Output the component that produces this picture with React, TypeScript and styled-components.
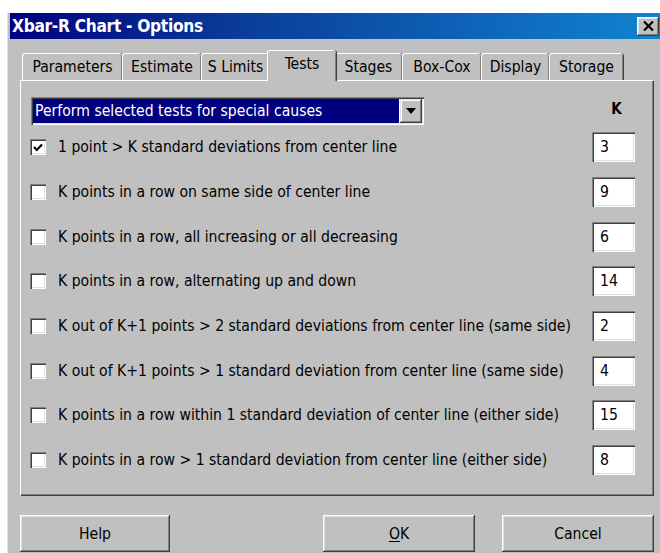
import React from "react"
import styled, { createGlobalStyle } from "styled-components"

const GlobalStyle = createGlobalStyle`
  html, body {
    margin: 0;
    background: #ffffff;
    overflow: hidden;
  }

  body {
    font-family: "DejaVu Sans Condensed", "Liberation Sans", sans-serif;
    font-size: 15.6px;
    color: #000000;
  }
`

const tabs = [
  { label: "Parameters", width: 100 },
  { label: "Estimate", width: 79 },
  { label: "S Limits", width: 68 },
  { label: "Tests", width: 65 },
  { label: "Stages", width: 68 },
  { label: "Box-Cox", width: 79 },
  { label: "Display", width: 68 },
  { label: "Storage", width: 74 },
]

const tests = [
  { label: "1 point > K standard deviations from center line", k: "3", checked: true },
  { label: "K points in a row on same side of center line", k: "9" },
  { label: "K points in a row, all increasing or all decreasing", k: "6" },
  { label: "K points in a row, alternating up and down", k: "14" },
  { label: "K out of K+1 points > 2 standard deviations from center line (same side)", k: "2" },
  { label: "K out of K+1 points > 1 standard deviation from center line (same side)", k: "4" },
  { label: "K points in a row within 1 standard deviation of center line (either side)", k: "15" },
  { label: "K points in a row > 1 standard deviation from center line (either side)", k: "8" },
]

export default function App() {
  return (
    <>
      <GlobalStyle/>
      <Page>
        <Window>
          <TitleBar>
            <Title>Xbar-R Chart - Options</Title>
            <CloseButton aria-label="Close">
              <svg width="11" height="10" viewBox="0 0 11 10">
                <path d="M1 0.5 L10 9.5 M10 0.5 L1 9.5" stroke="#000" strokeWidth="2.2"/>
              </svg>
            </CloseButton>
          </TitleBar>

          <Body>
            <TabStrip>
              {tabs.map(tab => (
                <Tab key={tab.label} $width={tab.width} $active={tab.label === "Tests"}>
                  {tab.label}
                </Tab>
              ))}
            </TabStrip>

            <Panel>
              <HeaderRow>
                <Select>
                  <SelectValue>Perform selected tests for special causes</SelectValue>
                  <ArrowButton>
                    <svg width="10" height="6" viewBox="0 0 10 6">
                      <path d="M0 0 H10 L5 6 Z" fill="#000"/>
                    </svg>
                  </ArrowButton>
                </Select>
                <KColumn>K</KColumn>
              </HeaderRow>

              <TestList>
                {tests.map(test => (
                  <TestRow key={test.label}>
                    <Checkbox>
                      {test.checked && (
                        <svg width="10" height="9" viewBox="0 0 10 9">
                          <path d="M1 4 L3.8 7 L9 1.5" stroke="#000" strokeWidth="2.2" fill="none"/>
                        </svg>
                      )}
                    </Checkbox>
                    <TestLabel>{test.label}</TestLabel>
                    <KInput>{test.k}</KInput>
                  </TestRow>
                ))}
              </TestList>
            </Panel>

            <ButtonRow>
              <Button>Help</Button>
              <Spacer/>
              <Button><u>O</u>K</Button>
              <Button>Cancel</Button>
            </ButtonRow>
          </Body>
        </Window>
      </Page>
    </>
  )
}

const Page = styled.div`
  height: 553px;
  padding: 13px 0 0 7px;
  box-sizing: border-box;
`

const Window = styled.div`
  background: #c0c0c0;
  border-left: 1px solid #dfdfdf;
  padding-left: 2px;
  width: 651px;
  height: 560px;
`

const TitleBar = styled.div`
  align-items: center;
  background: linear-gradient(to right, #000080 0%, #0a3c9a 35%, #1084d0 100%);
  display: flex;
  height: 26px;
  justify-content: space-between;
  padding: 0 2px 0 2px;
`

const Title = styled.span`
  color: #ffffff;
  font-size: 17.2px;
  font-weight: bold;
  letter-spacing: -0.3px;
  margin-top: -1px;
`

const CloseButton = styled.div`
  align-items: center;
  background: #c0c0c0;
  box-shadow: inset -1px -1px #404040, inset 1px 1px #ffffff, inset -2px -2px #808080, inset 2px 2px #dfdfdf;
  display: flex;
  height: 19px;
  justify-content: center;
  width: 22px;
`

const Body = styled.div`
  padding: 11px 0 0 10px;
`

const TabStrip = styled.div`
  align-items: flex-end;
  display: flex;
  height: 30px;
  padding-left: 2px;
  position: relative;
  z-index: 1;
`

const Tab = styled.div<{ $width: number, $active?: boolean }>`
  align-items: center;
  background: #c0c0c0;
  border-left: 1px solid #ffffff;
  border-radius: 3px 3px 0 0;
  border-top: 1px solid #ffffff;
  box-shadow: inset -1px 0 #808080, 1px 0 #404040;
  box-sizing: border-box;
  display: flex;
  height: ${({ $active }) => $active ? "31px" : "27px"};
  justify-content: center;
  margin: ${({ $active }) => $active ? "0 -2px -1px -2px" : "0"};
  padding-bottom: ${({ $active }) => $active ? "4px" : "0"};
  width: ${({ $width, $active }) => $active ? $width + 4 : $width}px;
  z-index: ${({ $active }) => $active ? 2 : 0};
`

const Panel = styled.div`
  border-left: 1px solid #ffffff;
  border-top: 1px solid #ffffff;
  box-shadow: inset -1px -1px #808080, 1px 1px #404040;
  box-sizing: border-box;
  height: 415px;
  padding: 16px 18px 0 9px;
  width: 633px;
`

const HeaderRow = styled.div`
  align-items: center;
  display: flex;
  justify-content: space-between;
  padding-left: 1px;
`

const Select = styled.div`
  background: #ffffff;
  box-shadow: inset 1px 1px #808080, inset 2px 2px #404040, inset -1px -1px #ffffff, inset -2px -2px #dfdfdf;
  box-sizing: border-box;
  display: flex;
  height: 28px;
  padding: 2px;
  width: 393px;
`

const SelectValue = styled.div`
  align-items: center;
  background: #000080;
  color: #ffffff;
  display: flex;
  flex: 1;
  padding-left: 2px;
`

const ArrowButton = styled.div`
  align-items: center;
  background: #c0c0c0;
  box-shadow: inset -1px -1px #404040, inset 1px 1px #dfdfdf, inset -2px -2px #808080, inset 2px 2px #ffffff;
  display: flex;
  justify-content: center;
  margin-left: 1px;
  width: 22px;
`

const KColumn = styled.div`
  font-size: 15px;
  font-weight: bold;
  margin-right: -3px;
  padding-bottom: 5px;
  text-align: center;
  width: 43px;
`

const TestList = styled.div`
  display: grid;
  grid-auto-rows: 44.7px;
`

const TestRow = styled.div`
  align-items: center;
  display: flex;
`

const Checkbox = styled.div`
  align-items: center;
  background: #ffffff;
  box-shadow: inset 1px 1px #808080, inset 2px 2px #404040, inset -1px -1px #ffffff, inset -2px -2px #dfdfdf;
  display: flex;
  flex: none;
  height: 16px;
  justify-content: center;
  width: 16px;
`

const TestLabel = styled.span`
  flex: 1;
  padding-left: 12px;
`

const KInput = styled.div`
  align-items: center;
  background: #ffffff;
  box-shadow: inset 1px 1px #808080, inset 2px 2px #404040, inset -1px -1px #ffffff, inset -2px -2px #dfdfdf;
  box-sizing: border-box;
  display: flex;
  height: 30px;
  padding-left: 8px;
  width: 43px;
`

const ButtonRow = styled.div`
  display: flex;
  gap: 27px;
  padding-top: 20px;
  width: 634px;
`

const Spacer = styled.div`
  flex: 1;
`

const Button = styled.div`
  align-items: center;
  background: #c0c0c0;
  box-shadow: inset -1px -1px #404040, inset 1px 1px #ffffff, inset -2px -2px #808080, inset 2px 2px #dfdfdf;
  display: flex;
  height: 37px;
  justify-content: center;
  width: 152px;

  &:first-child {
    width: 150px;
  }

  u {
    text-decoration-thickness: 1px;
    text-underline-offset: 2px;
  }
`
